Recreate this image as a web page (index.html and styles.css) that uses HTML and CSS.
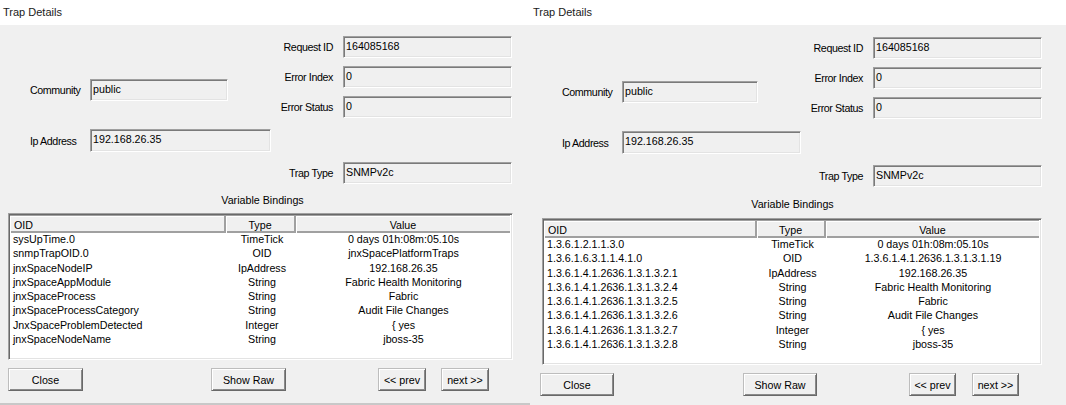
FILE: index.html
```html
<!DOCTYPE html>
<html lang="en">
<head>
<meta charset="utf-8">
<title>Trap Details</title>
<link rel="stylesheet" href="styles.css">
</head>
<body>
<div class="screen">
  <section class="dialog dialog--a">
    <header class="dialog__title">Trap Details</header>
    <div class="dialog__body">
      <div class="fields">
        <div class="fields__left">
          <div class="field field--community"><span class="field__label">Community</span><span class="field__box field__box--comm">public</span></div>
          <div class="field field--ip"><span class="field__label">Ip Address</span><span class="field__box field__box--ip">192.168.26.35</span></div>
        </div>
        <div class="fields__right">
          <div class="field field--req"><span class="field__label">Request ID</span><span class="field__box">164085168</span></div>
          <div class="field field--eidx"><span class="field__label">Error Index</span><span class="field__box">0</span></div>
          <div class="field field--estat"><span class="field__label">Error Status</span><span class="field__box">0</span></div>
          <div class="field field--trap"><span class="field__label">Trap Type</span><span class="field__box">SNMPv2c</span></div>
        </div>
      </div>
      <div class="vb-title">Variable Bindings</div>
      <div class="grid">
        <div class="grid__head">
          <div class="th th--oid">OID</div><div class="th">Type</div><div class="th th--last">Value</div>
        </div>
        <div class="grid__rows">
          <div class="tr"><div class="td td--oid">sysUpTime.0</div><div class="td">TimeTick</div><div class="td">0 days 01h:08m:05.10s</div></div>
          <div class="tr"><div class="td td--oid">snmpTrapOID.0</div><div class="td">OID</div><div class="td">jnxSpacePlatformTraps</div></div>
          <div class="tr"><div class="td td--oid">jnxSpaceNodeIP</div><div class="td">IpAddress</div><div class="td">192.168.26.35</div></div>
          <div class="tr"><div class="td td--oid">jnxSpaceAppModule</div><div class="td">String</div><div class="td">Fabric Health Monitoring</div></div>
          <div class="tr"><div class="td td--oid">jnxSpaceProcess</div><div class="td">String</div><div class="td">Fabric</div></div>
          <div class="tr"><div class="td td--oid">jnxSpaceProcessCategory</div><div class="td">String</div><div class="td">Audit File Changes</div></div>
          <div class="tr"><div class="td td--oid">JnxSpaceProblemDetected</div><div class="td">Integer</div><div class="td">{ yes</div></div>
          <div class="tr"><div class="td td--oid">jnxSpaceNodeName</div><div class="td">String</div><div class="td">jboss-35</div></div>
        </div>
      </div>
      <div class="buttons">
        <button class="btn btn--wide">Close</button>
        <button class="btn btn--wide btn--raw">Show Raw</button>
        <button class="btn btn--nav btn--prev">&lt;&lt; prev</button>
        <button class="btn btn--nav btn--next">next &gt;&gt;</button>
      </div>
    </div>
  </section>

  <section class="dialog dialog--b">
    <header class="dialog__title">Trap Details</header>
    <div class="dialog__body">
      <div class="fields">
        <div class="fields__left">
          <div class="field field--community"><span class="field__label">Community</span><span class="field__box field__box--comm">public</span></div>
          <div class="field field--ip"><span class="field__label">Ip Address</span><span class="field__box field__box--ip">192.168.26.35</span></div>
        </div>
        <div class="fields__right">
          <div class="field field--req"><span class="field__label">Request ID</span><span class="field__box">164085168</span></div>
          <div class="field field--eidx"><span class="field__label">Error Index</span><span class="field__box">0</span></div>
          <div class="field field--estat"><span class="field__label">Error Status</span><span class="field__box">0</span></div>
          <div class="field field--trap"><span class="field__label">Trap Type</span><span class="field__box">SNMPv2c</span></div>
        </div>
      </div>
      <div class="vb-title">Variable Bindings</div>
      <div class="grid">
        <div class="grid__head">
          <div class="th th--oid">OID</div><div class="th">Type</div><div class="th th--last">Value</div>
        </div>
        <div class="grid__rows">
          <div class="tr"><div class="td td--oid">1.3.6.1.2.1.1.3.0</div><div class="td">TimeTick</div><div class="td">0 days 01h:08m:05.10s</div></div>
          <div class="tr"><div class="td td--oid">1.3.6.1.6.3.1.1.4.1.0</div><div class="td">OID</div><div class="td">1.3.6.1.4.1.2636.1.3.1.3.1.19</div></div>
          <div class="tr"><div class="td td--oid">1.3.6.1.4.1.2636.1.3.1.3.2.1</div><div class="td">IpAddress</div><div class="td">192.168.26.35</div></div>
          <div class="tr"><div class="td td--oid">1.3.6.1.4.1.2636.1.3.1.3.2.4</div><div class="td">String</div><div class="td">Fabric Health Monitoring</div></div>
          <div class="tr"><div class="td td--oid">1.3.6.1.4.1.2636.1.3.1.3.2.5</div><div class="td">String</div><div class="td">Fabric</div></div>
          <div class="tr"><div class="td td--oid">1.3.6.1.4.1.2636.1.3.1.3.2.6</div><div class="td">String</div><div class="td">Audit File Changes</div></div>
          <div class="tr"><div class="td td--oid">1.3.6.1.4.1.2636.1.3.1.3.2.7</div><div class="td">Integer</div><div class="td">{ yes</div></div>
          <div class="tr"><div class="td td--oid">1.3.6.1.4.1.2636.1.3.1.3.2.8</div><div class="td">String</div><div class="td">jboss-35</div></div>
        </div>
      </div>
      <div class="buttons">
        <button class="btn btn--wide">Close</button>
        <button class="btn btn--wide btn--raw">Show Raw</button>
        <button class="btn btn--nav btn--prev">&lt;&lt; prev</button>
        <button class="btn btn--nav btn--next">next &gt;&gt;</button>
      </div>
    </div>
  </section>
</div>
</body>
</html>
```

FILE: styles.css
```css
* { box-sizing: border-box; }

html, body {
  margin: 0;
  padding: 0;
  background: #ffffff;
}

body {
  font-family: "Liberation Sans", Arial, sans-serif;
  font-size: 10.7px;
  color: #000;
}

.screen {
  display: flex;
  width: 1066px;
  height: 405px;
  overflow: hidden;
}

/* per-dialog metrics */
.dialog--a {
  width: 530px;
  --fx: 30px;
  --lw: 243px;
  --req-top: 11px;
  --row-gap: 8px;
  --trap-gap: 44px;
  --comm-top: 54px;
  --ip-gap: 28px;
  --comm-w: 138px;
  --ip-w: 181px;
  --vb-top: 9px;
  --tbl-top: 6px;
  --tx: 8px;
  --tw: 505px;
  --th: 147px;
  --c1: 216px;
  --c2: 70px;
  --btn-top: 8px;
  --bx: 8px;
  --bw: 75px;
  --raw-gap: 128px;
  --prev-gap: 92px;
  --nw: 48px;
  --next-gap: 15px;
}

.dialog--b {
  width: 536px;
  --fx: 32px;
  --lw: 241px;
  --req-top: 12px;
  --row-gap: 8px;
  --trap-gap: 46px;
  --comm-top: 56px;
  --ip-gap: 28px;
  --comm-w: 136px;
  --ip-w: 179px;
  --vb-top: 10px;
  --tbl-top: 7px;
  --tx: 12px;
  --tw: 500px;
  --th: 147px;
  --c1: 213px;
  --c2: 69px;
  --btn-top: 8px;
  --bx: 10px;
  --bw: 74px;
  --raw-gap: 129px;
  --prev-gap: 92px;
  --nw: 47px;
  --next-gap: 16px;
}

.dialog {
  display: flex;
  flex-direction: column;
  height: 405px;
}

.dialog__title {
  height: 25px;
  padding-left: 3px;
  font-size: 11px;
  line-height: 24px;
  background: #ffffff;
  color: #1a1a1a;
}

.dialog__body {
  flex: 1;
  background: #f0f0f0;
}

.dialog--a .dialog__body {
  border-bottom: 2px solid #c8c8c8;
}

/* fields */
.fields {
  display: flex;
  padding-left: var(--fx);
}

.fields__left {
  width: var(--lw);
  display: flex;
  flex-direction: column;
}

.fields__right {
  display: flex;
  flex-direction: column;
}

.field {
  display: flex;
  align-items: center;
}

.field__label {
  white-space: nowrap;
  letter-spacing: -0.4px;
}

.fields__left .field__label {
  width: 60px;
}

.fields__right .field__label {
  width: 70px;
  padding-right: 10px;
  text-align: right;
}

.field__box {
  width: 169px;
  height: 22px;
  padding: 2px 0 0 2px;
  line-height: 15px;
  background: #f0f0f0;
  border: 1px solid;
  border-color: #a0a0a0 #ffffff #ffffff #a0a0a0;
  box-shadow: inset 1px 1px 0 #7a7a7a, inset -1px -1px 0 #e3e3e3;
  white-space: nowrap;
}

.field__box--comm { width: var(--comm-w); }
.field__box--ip { width: var(--ip-w); height: 23px; }

.field--community { margin-top: var(--comm-top); }
.field--ip { margin-top: var(--ip-gap); }
.field--req { margin-top: var(--req-top); }
.field--eidx, .field--estat { margin-top: var(--row-gap); }
.field--trap { margin-top: var(--trap-gap); }

/* variable bindings */
.vb-title {
  margin-top: var(--vb-top);
  width: 525px;
  text-align: center;
  line-height: 14px;
}

.grid {
  margin-top: var(--tbl-top);
  margin-left: var(--tx);
  width: var(--tw);
  height: var(--th);
  background: #ffffff;
  border: 1px solid;
  border-color: #a0a0a0 #ffffff #ffffff #a0a0a0;
  box-shadow: inset 1px 1px 0 #696969, inset -1px -1px 0 #e3e3e3;
  padding: 2px;
  overflow: hidden;
}

.grid__head {
  display: grid;
  grid-template-columns: var(--c1) var(--c2) 1fr;
  height: 18px;
  background: #f0f0f0;
  border-bottom: 2px solid #a0a0a0;
  margin-top: -1px;
  margin-left: -1px;
}

.th {
  line-height: 16px;
  padding-top: 1px;
  text-align: center;
  border-right: 2px solid #a0a0a0;
  box-shadow: inset 1px 1px 0 #ffffff;
  border-top: 1px solid #a0a0a0;
}

.th--oid {
  text-align: left;
  padding-left: 4px;
}

.th--last { border-right: 0; }

.grid__rows {
  margin-top: -1px;
}

.tr {
  display: grid;
  grid-template-columns: var(--c1) var(--c2) 1fr;
  line-height: 14.3px;
}

.td {
  text-align: center;
  white-space: nowrap;
}

.td--oid {
  text-align: left;
  padding-left: 2px;
}

/* buttons */
.buttons {
  display: flex;
  margin-top: var(--btn-top);
  padding-left: var(--bx);
}

.btn {
  height: 23px;
  padding: 0;
  font: inherit;
  color: #000;
  background: #f0f0f0;
  border: 1px solid;
  border-color: #bdbdbd #696969 #696969 #bdbdbd;
  box-shadow: inset 1px 1px 0 #ffffff, inset -1px -1px 0 #8a8a8a;
}

.btn--wide { width: var(--bw); }
.btn--nav { width: var(--nw); }
.btn--raw { margin-left: var(--raw-gap); }
.btn--prev { margin-left: var(--prev-gap); }
.btn--next { margin-left: var(--next-gap); }
```
